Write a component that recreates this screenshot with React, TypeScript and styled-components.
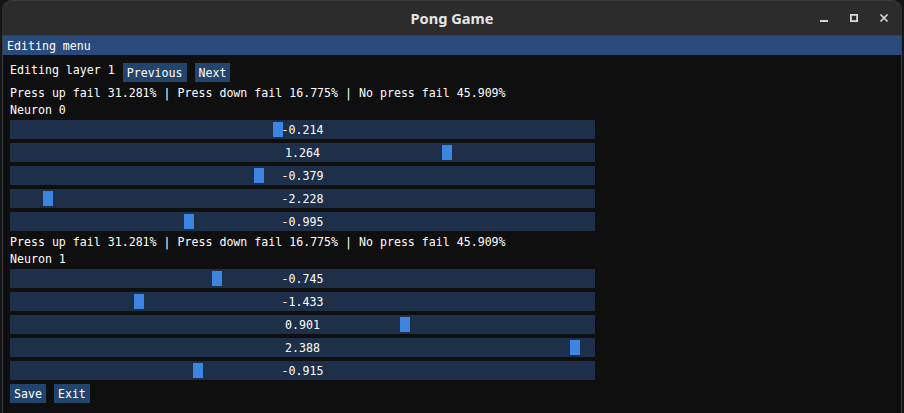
import React from "react";
import styled, { createGlobalStyle } from "styled-components";

const GlobalStyle = createGlobalStyle`
  html, body { margin: 0; padding: 0; background: #161616; }
  body { overflow: hidden; }
  * { box-sizing: border-box; }
`;

const Desktop = styled.div`
  width: 904px;
  height: 413px;
  display: flex;
  padding: 0 2px 0 2px;
  background: #161616;
`;

const Window = styled.div`
  width: 900px;
  height: 413px;
  display: flex;
  flex-direction: column;
  background: #2c2c2c;
  border-radius: 10px 10px 0 0;
  overflow: hidden;
  box-shadow: inset 0 1px 0 #3a3a3a;
`;

const TitleBar = styled.div`
  height: 35px;
  flex: none;
  display: grid;
  grid-template-columns: 1fr auto 1fr;
  align-items: center;
`;

const Title = styled.div`
  grid-column: 2;
  font-family: "Noto Sans", "Open Sans", sans-serif;
  font-weight: 700;
  font-size: 14.6px;
  color: #e6e6e6;
  padding-top: 1px;
`;

const Controls = styled.div`
  grid-column: 3;
  justify-self: end;
  display: flex;
  gap: 6px;
  padding-right: 6px;
`;

const CtrlButton = styled.div`
  width: 24px;
  height: 24px;
  display: flex;
  align-items: center;
  justify-content: center;
  color: #d8d8d8;
`;

const ImWindow = styled.div`
  flex: 1;
  display: flex;
  flex-direction: column;
  background: #0f0f0f;
  border: 1px solid #3b3b44;
  border-bottom: none;
  font-family: "DejaVu Sans Mono", "Liberation Mono", monospace;
  font-size: 11.6px;
  line-height: 13px;
  color: #ffffff;
`;

const ImTitle = styled.div`
  height: 19px;
  flex: none;
  background: #294a7a;
  padding: 4px 4px 2px;
  white-space: pre;
`;

const Content = styled.div`
  display: flex;
  flex-direction: column;
  gap: 4px;
  padding: 8px 7px;
`;

const Row = styled.div`
  display: flex;
  gap: 8px;
  align-items: flex-start;
`;

const Text = styled.div`
  height: 13px;
  padding-top: 1px;
  white-space: pre;
`;

const Button = styled.div`
  height: 19px;
  padding: 4px 4px 2px;
  background: #23456d;
  white-space: pre;
`;

const SliderFrame = styled.div`
  position: relative;
  width: 585px;
  height: 19px;
  background: #1d2f49;
  padding: 4px 4px 2px;
  text-align: center;
  white-space: pre;
`;

const Grab = styled.div`
  position: absolute;
  top: 2px;
  width: 10px;
  height: 15px;
  background: #3d85e0;
`;

const SliderLabel = styled.span`
  position: relative;
`;

const MIN = -2.5;
const MAX = 2.5;

function Slider({ value }: { value: number }) {
  const t = (value - MIN) / (MAX - MIN);
  const left = 2 + t * (585 - 4 - 10);
  return (
    <SliderFrame>
      <Grab style={{ left: `${left}px` }} />
      <SliderLabel>{value.toFixed(3)}</SliderLabel>
    </SliderFrame>
  );
}

const neurons = [
  [-0.214, 1.264, -0.379, -2.228, -0.995],
  [-0.745, -1.433, 0.901, 2.388, -0.915],
];

const stats =
  "Press up fail 31.281% | Press down fail 16.775% | No press fail 45.909%";

export default function App() {
  return (
    <>
      <GlobalStyle />
      <Desktop>
        <Window>
          <TitleBar>
            <Title>Pong Game</Title>
            <Controls>
              <CtrlButton>
                <svg width="10" height="10" viewBox="0 0 10 10">
                  <rect x="1" y="7" width="8" height="2" fill="currentColor" />
                </svg>
              </CtrlButton>
              <CtrlButton>
                <svg width="10" height="10" viewBox="0 0 10 10">
                  <rect x="1.9" y="1.9" width="6.2" height="6.2" fill="none" stroke="currentColor" strokeWidth="1.8" />
                </svg>
              </CtrlButton>
              <CtrlButton>
                <svg width="10" height="10" viewBox="0 0 10 10">
                  <path d="M1.5 1.5 L8.5 8.5 M8.5 1.5 L1.5 8.5" stroke="currentColor" strokeWidth="1.7" />
                </svg>
              </CtrlButton>
            </Controls>
          </TitleBar>
          <ImWindow>
            <ImTitle>Editing menu</ImTitle>
            <Content>
              <Row>
                <Text>Editing layer 1</Text>
                <Button>Previous</Button>
                <Button>Next</Button>
              </Row>
              {neurons.map((vals, i) => (
                <React.Fragment key={i}>
                  <Text>{stats}</Text>
                  <Text>{`Neuron ${i}`}</Text>
                  {vals.map((v, j) => (
                    <Slider key={j} value={v} />
                  ))}
                </React.Fragment>
              ))}
              <Row>
                <Button>Save</Button>
                <Button>Exit</Button>
              </Row>
            </Content>
          </ImWindow>
        </Window>
      </Desktop>
    </>
  );
}
